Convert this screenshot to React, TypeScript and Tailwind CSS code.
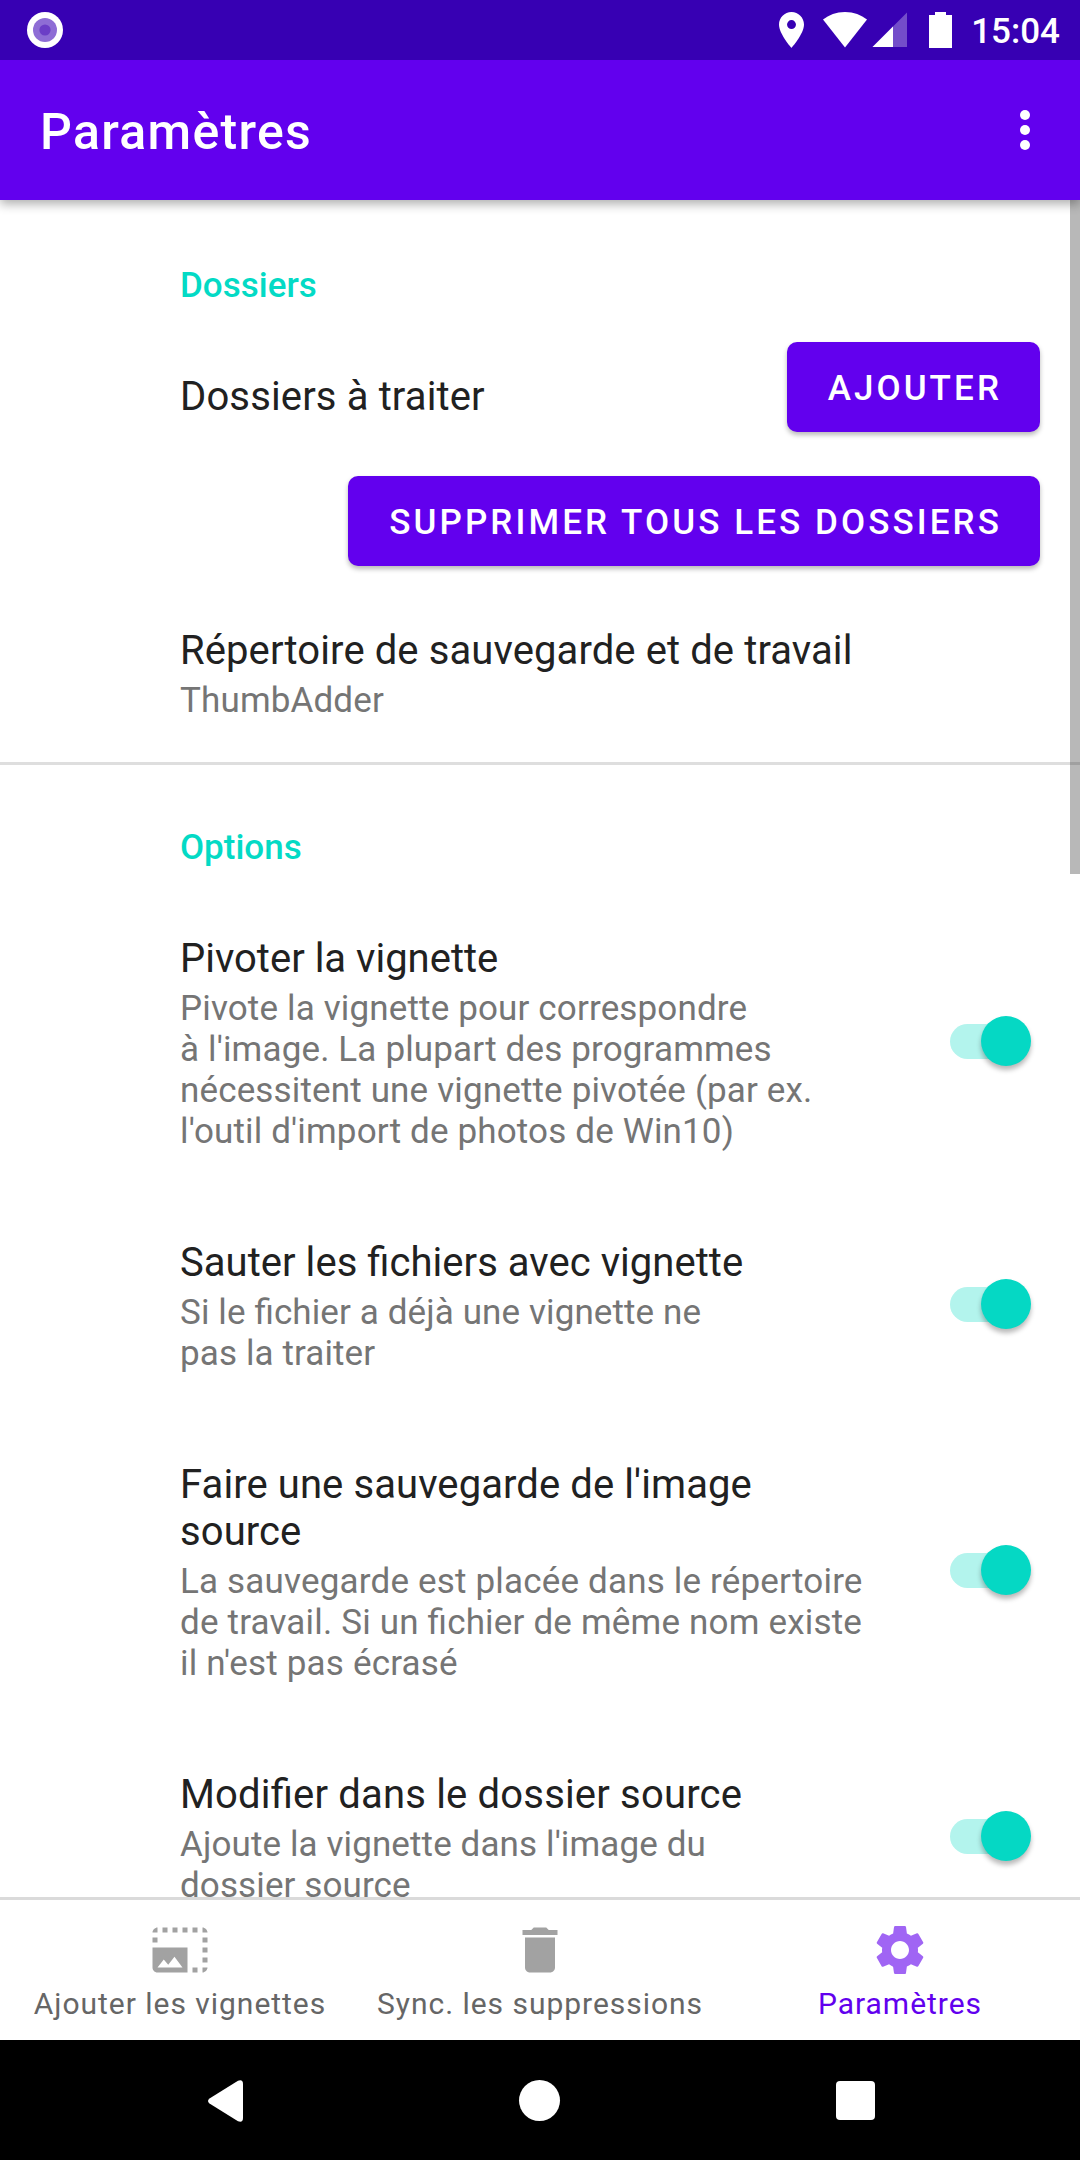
import React from "react";
import { MdDelete, MdPhotoSizeSelectLarge, MdSettings } from "react-icons/md";

type Option = { title: string; titleTracking: string; summary: string; summaryTracking: string };

const options: Option[] = [
  {
    title: "Pivoter la vignette",
    titleTracking: "tracking-normal",
    summary:
      "Pivote la vignette pour correspondre\nà l'image. La plupart des programmes\nnécessitent une vignette pivotée (par ex.\nl'outil d'import de photos de Win10)",
    summaryTracking: "tracking-[0.15px]",
  },
  {
    title: "Sauter les fichiers avec vignette",
    titleTracking: "tracking-[0.04px]",
    summary: "Si le fichier a déjà une vignette ne\npas la traiter",
    summaryTracking: "tracking-[0.11px]",
  },
  {
    title: "Faire une sauvegarde de l'image\nsource",
    titleTracking: "tracking-[0.09px]",
    summary:
      "La sauvegarde est placée dans le répertoire\nde travail. Si un fichier de même nom existe\nil n'est pas écrasé",
    summaryTracking: "tracking-[0.18px]",
  },
  {
    title: "Modifier dans le dossier source",
    titleTracking: "tracking-[0.18px]",
    summary: "Ajoute la vignette dans l'image du\ndossier source",
    summaryTracking: "tracking-[0.11px]",
  },
];

const titleClass = "whitespace-pre text-[40px] leading-[47px] text-[#212121] [font-feature-settings:'liga']";
const summaryClass =
  "mt-1.5 -mb-px whitespace-pre text-[35px] leading-[41px] text-[#757575] [font-feature-settings:'liga']";

function StatusBar() {
  return (
    <div className="relative z-20 flex h-[60px] shrink-0 items-center justify-between bg-[#3700b3] pl-[27px] pr-5">
      <svg className="size-9" viewBox="0 0 36 36">
        <circle cx="18" cy="18" r="18" fill="#fff" />
        <circle cx="18" cy="18" r="12" fill="#8e6dd5" />
        <circle cx="18" cy="18" r="5.6" fill="#6b3ec6" />
      </svg>
      <div className="flex items-center">
        <svg className="h-9 w-[25px]" viewBox="5 2 14 20" preserveAspectRatio="none" fill="#fff">
          <path d="M12 2C8.13 2 5 5.13 5 9c0 5.25 7 13 7 13s7-7.75 7-13c0-3.87-3.13-7-7-7zm0 9.5a2.5 2.5 0 0 1 0-5 2.5 2.5 0 0 1 0 5z" />
        </svg>
        <svg className="ml-[18px] h-9 w-[46px]" viewBox="0 0 46 36" fill="#fff">
          <path d="M1 7.500C7 3 14 0 23 0s16 3 22 7.500L23 35.500z" />
        </svg>
        <svg className="ml-1 h-9 w-9" viewBox="0 0 36 36" fill="#fff">
          <path d="M0.500 35L35 0.500V35z" fillOpacity="0.3" />
          <path d="M0.500 35L21 14.500V35z" />
        </svg>
        <svg className="ml-[21px] h-9 w-[23px]" viewBox="0 0 23 36" fill="#fff">
          <path d="M6 0h11v3h6v33H0V3h6z" />
        </svg>
        <span className="ml-[19px] mt-0.5 text-[35px] font-medium leading-[41px] text-white">15:04</span>
      </div>
    </div>
  );
}

function Toolbar() {
  return (
    <header className="relative z-10 flex h-[140px] shrink-0 items-center justify-between bg-[#6200ee] pl-10 pr-[50px] shadow-[0_4px_10px_rgba(0,0,0,0.32)]">
      <h1 className="mt-[3px] text-[50px] font-medium leading-[58px] tracking-[1.3px] text-white">
        Paramètres
      </h1>
      <div className="flex flex-col gap-[5px]">
        <span className="size-2.5 rounded-full bg-white" />
        <span className="size-2.5 rounded-full bg-white" />
        <span className="size-2.5 rounded-full bg-white" />
      </div>
    </header>
  );
}

function FilledButton({ children }: { children: React.ReactNode }) {
  return (
    <button className="h-[90px] rounded-[10px] bg-[#6200ee] pl-[41px] pr-[38px] pt-[5px] text-[35px] font-medium tracking-[3.08px] text-white shadow-[0_3px_5px_rgba(0,0,0,0.28)]">
      {children}
    </button>
  );
}

function Toggle() {
  return (
    <div className="mb-[5px] flex h-[50px] w-[81px] items-center">
      <span className="mt-0.5 h-[35px] w-[70px] rounded-full bg-[#b3f4ed]" />
      <span className="-ml-[39px] size-[50px] shrink-0 rounded-full bg-[#05d8c4] shadow-[0_4px_5px_rgba(0,0,0,0.28)]" />
    </div>
  );
}

function SectionTitle({ children }: { children: React.ReactNode }) {
  return <h2 className="text-[35px] font-medium leading-[41px] text-[#03dac5]">{children}</h2>;
}

function NavItem({ icon, label, active }: { icon: React.ReactNode; label: string; active?: boolean }) {
  return (
    <div
      className={
        active
          ? "flex flex-1 flex-col items-center pt-5 text-[#6200ee]"
          : "flex flex-1 flex-col items-center pt-5 text-[#666666]"
      }
    >
      <span className="size-[60px] text-[60px] opacity-60">{icon}</span>
      <span className="mt-1.5 whitespace-nowrap text-[30px] leading-[35px] tracking-[0.97px]">{label}</span>
    </div>
  );
}

export default function App() {
  return (
    <div className="flex h-[2160px] w-[1080px] flex-col overflow-hidden bg-white font-['Roboto',sans-serif]">
      <StatusBar />
      <Toolbar />
      <main className="relative h-[1697px] shrink-0 overflow-hidden">
        <section className="h-[562px] pl-[180px] pr-10 pt-[65px]">
          <SectionTitle>Dossiers</SectionTitle>
          <div className="mt-9 flex items-start justify-between">
            <div className="mt-[31px] text-[40px] leading-[47px] tracking-[0.14px] text-[#212121]">
              Dossiers à traiter
            </div>
            <FilledButton>AJOUTER</FilledButton>
          </div>
          <div className="mt-11 flex justify-end">
            <FilledButton>SUPPRIMER TOUS LES DOSSIERS</FilledButton>
          </div>
          <div className="mt-[61px]">
            <div className={`${titleClass} tracking-[0.1px]`}>Répertoire de sauvegarde et de travail</div>
            <div className={`${summaryClass} tracking-[0.14px]`}>ThumbAdder</div>
          </div>
        </section>
        <hr className="h-[3px] border-0 bg-[#dedede]" />
        <section className="pl-[180px] pr-[49px] pt-[62px]">
          <SectionTitle>Options</SectionTitle>
          <div className="mt-[22px]">
            {options.map((o) => (
              <div key={o.title} className="flex items-center justify-between pb-[43px] pt-[45px]">
                <div>
                  <div className={`${titleClass} ${o.titleTracking}`}>{o.title}</div>
                  <div className={`${summaryClass} ${o.summaryTracking}`}>{o.summary}</div>
                </div>
                <Toggle />
              </div>
            ))}
          </div>
        </section>
        <div className="absolute right-0 top-0 h-[674px] w-2.5 bg-black/28" />
      </main>
      <nav className="flex h-[143px] shrink-0 border-t-[3px] border-[#dadada] bg-white">
        <NavItem icon={<MdPhotoSizeSelectLarge />} label="Ajouter les vignettes" />
        <NavItem icon={<MdDelete />} label="Sync. les suppressions" />
        <NavItem icon={<MdSettings />} label="Paramètres" active />
      </nav>
      <div className="flex h-[120px] shrink-0 items-center justify-between bg-black pl-[208px] pr-[205px]">
        <svg className="mt-px h-[42px] w-[35px]" viewBox="0 0 35 42" fill="#fff">
          <path d="M1.500 18.500L30 0.700Q35 -1 35 4V38Q35 43 30 41.300L1.500 23.500Q-1.500 21 1.500 18.500z" />
        </svg>
        <span className="size-[41px] rounded-full bg-white" />
        <span className="mt-px h-[39px] w-[39px] rounded-[4px] bg-white" />
      </div>
    </div>
  );
}
